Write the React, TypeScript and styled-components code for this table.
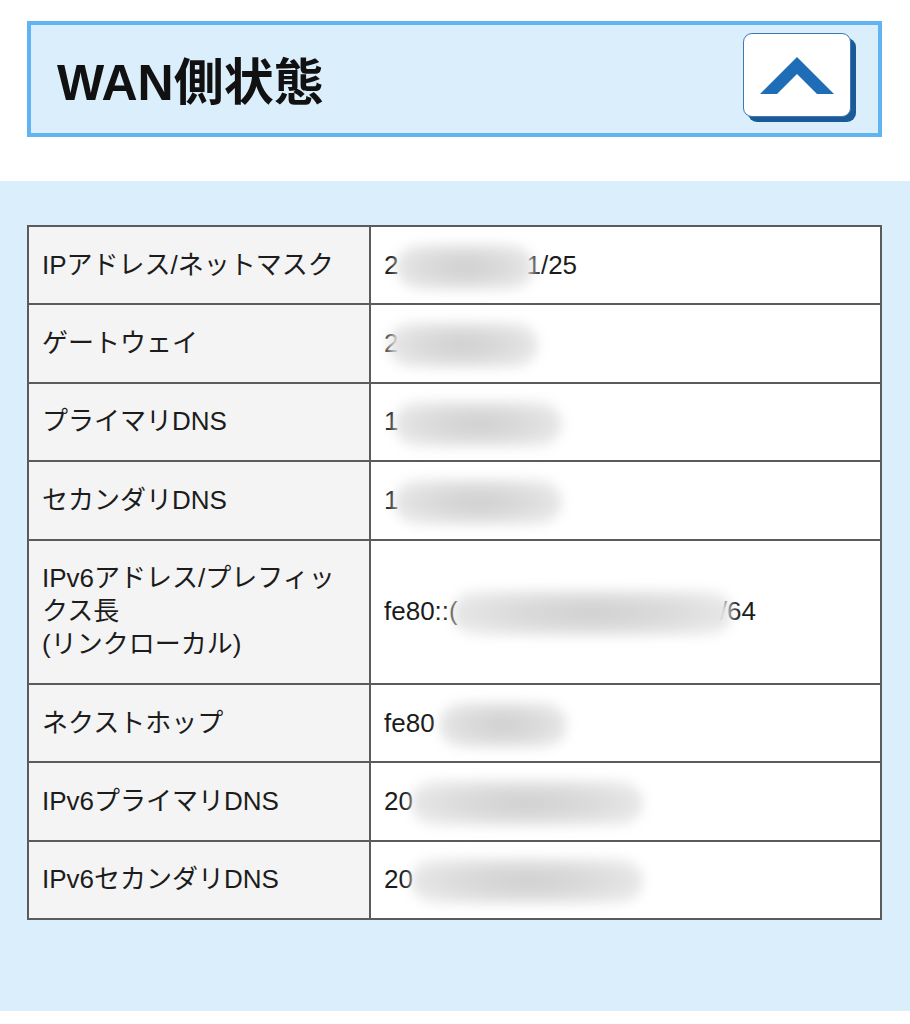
import React from "react";
import styled, { createGlobalStyle } from "styled-components";

const Global = createGlobalStyle`
  html, body { margin: 0; padding: 0; background: #ffffff; }
  body { font-family: "Liberation Sans", "Noto Sans CJK JP", sans-serif; color: #1a1a1a; }
`;

const Page = styled.div`
  width: 910px;
  padding-top: 21px;
  display: flex;
  flex-direction: column;
  gap: 44px;
`;

const Header = styled.div`
  margin: 0 28px 0 27px;
  height: 116px;
  box-sizing: border-box;
  border: 4px solid #5fb4f1;
  background: #dbeefc;
  display: flex;
  align-items: center;
  justify-content: space-between;
  padding: 0 27px 0 26px;
`;

const Title = styled.h1`
  margin: 0 0 2px;
  font-family: "Liberation Sans", "Noto Sans CJK JP", sans-serif;
  font-weight: 700;
  font-size: 50px;
  color: #111;
`;

const ToggleButton = styled.button`
  width: 108px;
  height: 84px;
  margin-bottom: 8px;
  padding: 0;
  background: #ffffff;
  border: 1.5px solid #3a78b6;
  border-radius: 9px;
  box-shadow: 5px 5px 0 #1b5a97;
  display: flex;
  align-items: center;
  justify-content: center;
  cursor: pointer;
`;

const Panel = styled.section`
  background: #dbeefc;
  padding: 44px 28px 91px 27px;
`;

const Table = styled.table`
  width: 855px;
  border-collapse: collapse;
  table-layout: fixed;
  background: #fff;
`;

const Cell = styled.td<{ $label?: boolean }>`
  border: 2px solid #5b5b5b;
  padding: 21.7px 13px;
  font-size: 26px;
  line-height: 33px;
  color: #1c1c1c;
  vertical-align: middle;
  background: ${(p) => (p.$label ? "#f4f4f4" : "#ffffff")};
  width: ${(p) => (p.$label ? "342px" : "auto")};
  box-sizing: border-box;
  white-space: nowrap;
`;

const Blob = styled.span<{ $w: number; $ml?: number; $mr?: number }>`
  display: inline-block;
  width: ${(p) => p.$w}px;
  height: 46px;
  margin: -10px ${(p) => p.$mr ?? 0}px -10px ${(p) => p.$ml ?? 0}px;
  vertical-align: middle;
  border-radius: 24px;
  background: radial-gradient(ellipse at center, #cfcfcf 0%, #dcdcdc 45%, #ebebeb 80%, rgba(245,245,245,0.6) 100%);
  filter: blur(6px);
  position: relative;
  z-index: 1;
`;

const Chevron = () => (
  <svg width="76" height="42" viewBox="0 0 76 42" aria-hidden>
    <polygon points="1,40 38,3 75,40 58,40 38,20 18,40" fill="#1e6db6" />
  </svg>
);

type Row = { label: React.ReactNode; value: React.ReactNode };

const rows: Row[] = [
  {
    label: "IPアドレス/ネットマスク",
    value: (
      <>
        2<Blob $w={138} $ml={-2} $mr={-8} />1/25
      </>
    ),
  },
  {
    label: "ゲートウェイ",
    value: (
      <>
        2<Blob $w={150} $ml={-10} />
      </>
    ),
  },
  {
    label: "プライマリDNS",
    value: (
      <>
        1<Blob $w={168} $ml={-4} />
      </>
    ),
  },
  {
    label: "セカンダリDNS",
    value: (
      <>
        1<Blob $w={168} $ml={-4} />
      </>
    ),
  },
  {
    label: (
      <>
        IPv6アドレス/プレフィッ
        <br />
        クス長
        <br />
        (リンクローカル)
      </>
    ),
    value: (
      <>
        fe80::(<Blob $w={280} $ml={-6} $mr={-12} />/64
      </>
    ),
  },
  {
    label: "ネクストホップ",
    value: (
      <>
        fe80<Blob $w={128} $ml={4} />
      </>
    ),
  },
  {
    label: "IPv6プライマリDNS",
    value: (
      <>
        20<Blob $w={232} $ml={-2} />
      </>
    ),
  },
  {
    label: "IPv6セカンダリDNS",
    value: (
      <>
        20<Blob $w={232} $ml={-2} />
      </>
    ),
  },
];

export default function App() {
  return (
    <>
      <Global />
      <Page>
        <Header>
          <Title>WAN側状態</Title>
          <ToggleButton aria-label="閉じる">
            <Chevron />
          </ToggleButton>
        </Header>
        <Panel>
          <Table>
            <tbody>
              {rows.map((r, i) => (
                <tr key={i}>
                  <Cell $label>{r.label}</Cell>
                  <Cell>{r.value}</Cell>
                </tr>
              ))}
            </tbody>
          </Table>
        </Panel>
      </Page>
    </>
  );
}
